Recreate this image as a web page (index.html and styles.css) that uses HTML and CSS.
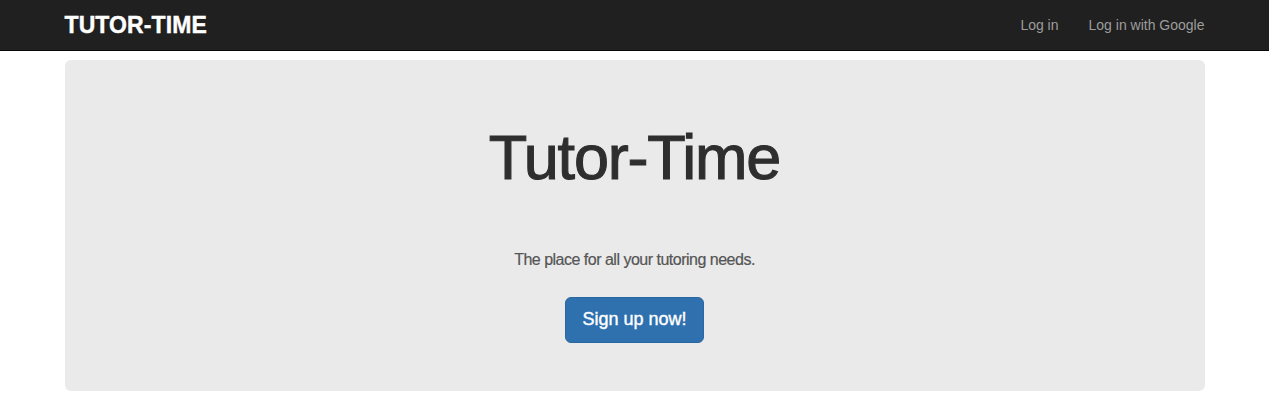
FILE: index.html
```html
<!DOCTYPE html>
<html>
<head>
<meta charset="utf-8">
<link rel="stylesheet" href="styles.css">
</head>
<body>
<nav class="navbar">
  <div class="container nav-inner">
    <a class="brand" href="#">TUTOR-TIME</a>
    <ul class="nav-links">
      <li><a href="#">Log in</a></li>
      <li><a href="#">Log in with Google</a></li>
    </ul>
  </div>
</nav>
<div class="container">
  <div class="jumbotron">
    <h1 class="title">Tutor-Time</h1>
    <p class="lead">The place for all your tutoring needs.</p>
    <a class="btn" href="#">Sign up now!</a>
  </div>
</div>
</body>
</html>
```
FILE: styles.css
```css
* { box-sizing: border-box; }
html, body { margin: 0; padding: 0; }
body {
  font-family: "Liberation Sans", Arial, Helvetica, sans-serif;
  font-size: 14px;
  line-height: 1.42857;
  color: #333;
  background: #fff;
}
.container {
  width: 1170px;
  margin: 0 auto;
  padding: 0 15px;
}
.navbar {
  background: #202020;
  border-bottom: 1px solid #080808;
  height: 51px;
}
.nav-inner {
  display: flex;
  align-items: center;
  justify-content: space-between;
  height: 50px;
}
.brand {
  color: #fff;
  font-weight: bold;
  font-size: 23px;
  text-decoration: none;
  letter-spacing: 0.1px;
  -webkit-text-stroke: 0.4px #fff;
}
.nav-links {
  list-style: none;
  display: flex;
  margin: 0 -15px 0 0;
  padding: 0;
}
.nav-links a {
  display: block;
  padding: 15px;
  line-height: 20px;
  color: #9d9d9d;
  text-decoration: none;
  font-size: 14px;
}
.jumbotron {
  margin-top: 9px;
  background: #eaeaea;
  border-radius: 6px;
  height: 331px;
  display: flex;
  flex-direction: column;
  align-items: center;
  padding-top: 63px;
}
.title {
  margin: 0;
  font-size: 63px;
  font-weight: 500;
  line-height: 69px;
  color: #2e2e2e;
  letter-spacing: -1.2px;
  -webkit-text-stroke: 1.1px #2e2e2e;
}
.lead {
  margin: 57px 0 0;
  font-size: 16px;
  line-height: 22px;
  color: #555;
  letter-spacing: -0.5px;
  -webkit-text-stroke: 0.2px #555;
}
.btn {
  margin-top: 26px;
  display: inline-block;
  padding: 10px 16px;
  font-size: 18px;
  line-height: 1.3333;
  color: #fff;
  background: #2f70af;
  border: 1px solid #2b67a0;
  border-radius: 6px;
  text-decoration: none;
  -webkit-text-stroke: 0.4px #fff;
}
```
